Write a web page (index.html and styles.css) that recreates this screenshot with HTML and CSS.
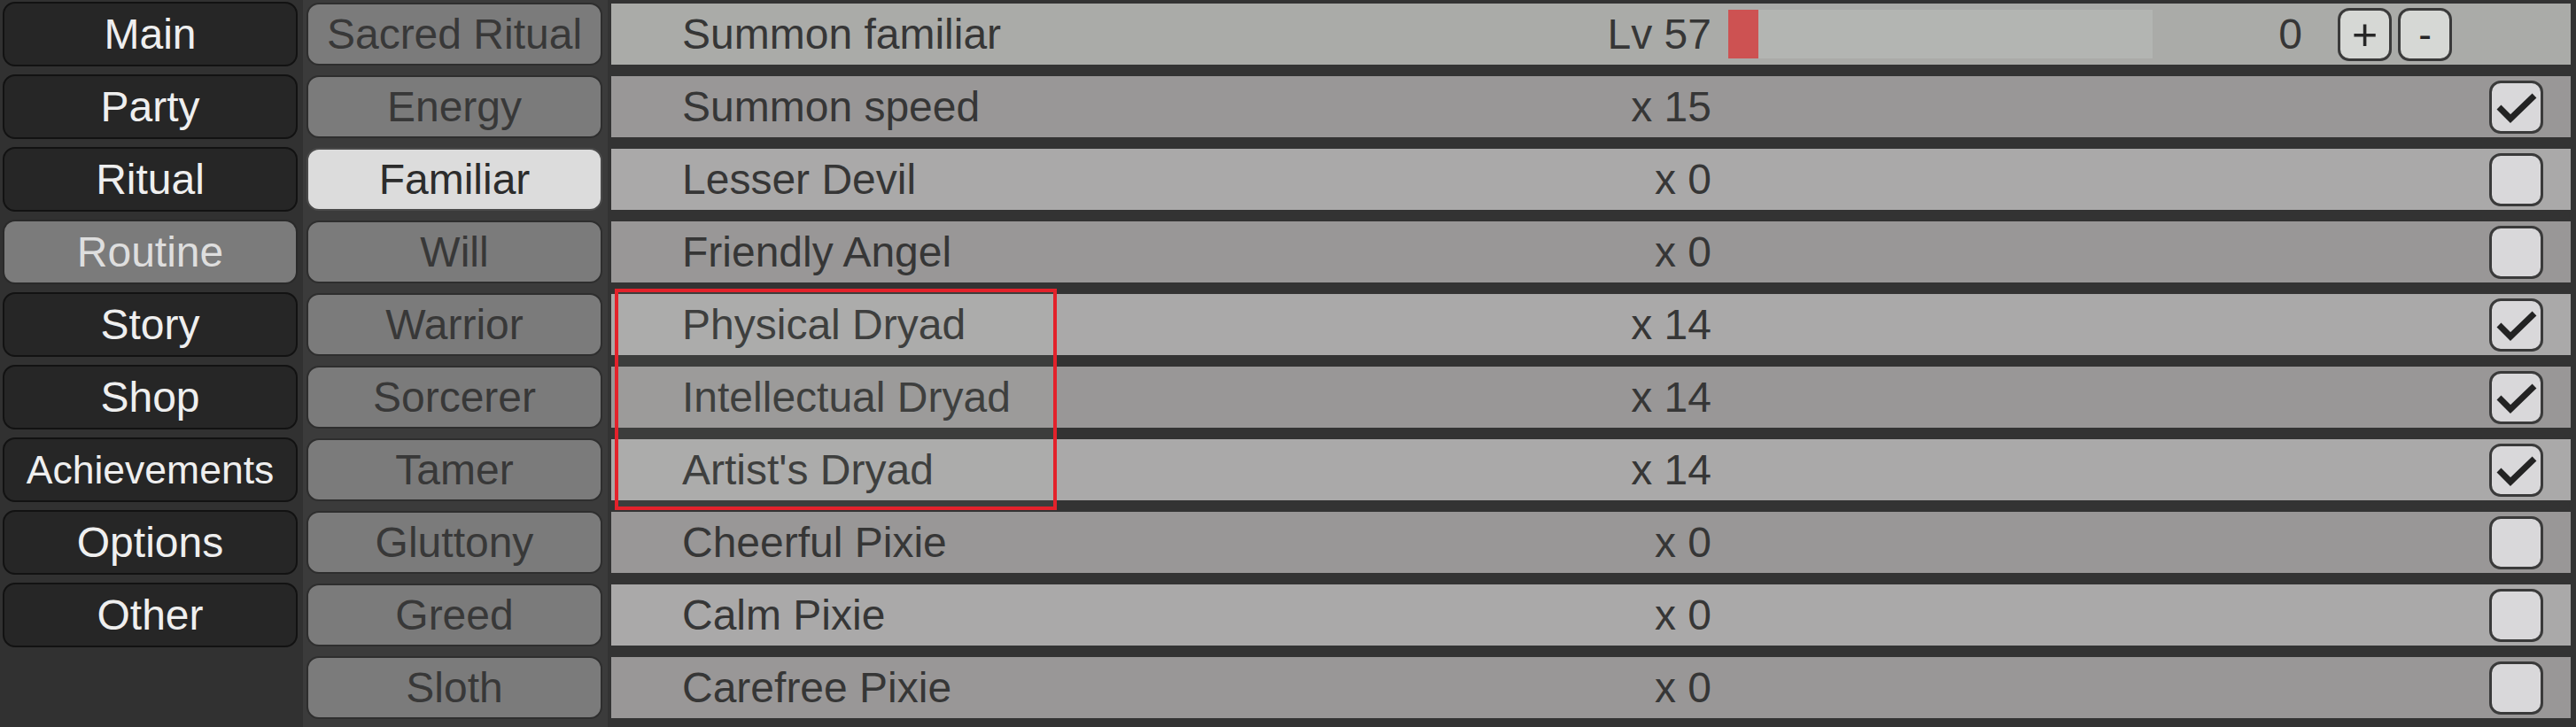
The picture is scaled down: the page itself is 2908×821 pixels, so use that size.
FILE: index.html
```html
<!DOCTYPE html>
<html>
<head>
<meta charset="utf-8">
<link rel="stylesheet" href="styles.css">
</head>
<body>
<div class="app">
  <nav class="col-main">
    <div class="btn-dark">Main</div>
    <div class="btn-dark">Party</div>
    <div class="btn-dark">Ritual</div>
    <div class="btn-dark btn-active">Routine</div>
    <div class="btn-dark">Story</div>
    <div class="btn-dark">Shop</div>
    <div class="btn-dark btn-fit">Achievements</div>
    <div class="btn-dark">Options</div>
    <div class="btn-dark">Other</div>
  </nav>
  <nav class="col-sub">
    <div class="btn-sub">Sacred Ritual</div>
    <div class="btn-sub">Energy</div>
    <div class="btn-sub btn-sel">Familiar</div>
    <div class="btn-sub">Will</div>
    <div class="btn-sub">Warrior</div>
    <div class="btn-sub">Sorcerer</div>
    <div class="btn-sub">Tamer</div>
    <div class="btn-sub">Gluttony</div>
    <div class="btn-sub">Greed</div>
    <div class="btn-sub">Sloth</div>
  </nav>
  <main class="col-list">
    <div class="row row-a">
      <div class="main"><span class="label">Summon familiar</span><span class="val">Lv 57</span></div>
      <div class="bar"><div class="bar-fill" style="width:34px"></div></div>
      <div class="count">0</div>
      <div class="step">+</div>
      <div class="step step-minus">-</div>
    </div>
    <div class="row row-b">
      <div class="main"><span class="label">Summon speed</span><span class="val">x 15</span></div>
      <div class="check on"><svg viewBox="0 0 61 60" width="61" height="60"><path d="M11 30 L24 43 L51 17" fill="none" stroke="#232323" stroke-width="7"/></svg></div>
    </div>
    <div class="row row-a">
      <div class="main"><span class="label">Lesser Devil</span><span class="val">x 0</span></div>
      <div class="check"></div>
    </div>
    <div class="row row-b">
      <div class="main"><span class="label">Friendly Angel</span><span class="val">x 0</span></div>
      <div class="check"></div>
    </div>
    <div class="row row-a">
      <div class="main"><span class="label">Physical Dryad</span><span class="val">x 14</span></div>
      <div class="check on"><svg viewBox="0 0 61 60" width="61" height="60"><path d="M11 30 L24 43 L51 17" fill="none" stroke="#232323" stroke-width="7"/></svg></div>
    </div>
    <div class="row row-b">
      <div class="main"><span class="label">Intellectual Dryad</span><span class="val">x 14</span></div>
      <div class="check on"><svg viewBox="0 0 61 60" width="61" height="60"><path d="M11 30 L24 43 L51 17" fill="none" stroke="#232323" stroke-width="7"/></svg></div>
    </div>
    <div class="row row-a">
      <div class="main"><span class="label">Artist's Dryad</span><span class="val">x 14</span></div>
      <div class="check on"><svg viewBox="0 0 61 60" width="61" height="60"><path d="M11 30 L24 43 L51 17" fill="none" stroke="#232323" stroke-width="7"/></svg></div>
    </div>
    <div class="row row-b">
      <div class="main"><span class="label">Cheerful Pixie</span><span class="val">x 0</span></div>
      <div class="check"></div>
    </div>
    <div class="row row-a">
      <div class="main"><span class="label">Calm Pixie</span><span class="val">x 0</span></div>
      <div class="check"></div>
    </div>
    <div class="row row-b">
      <div class="main"><span class="label">Carefree Pixie</span><span class="val">x 0</span></div>
      <div class="check"></div>
    </div>
    <div class="highlight"></div>
  </main>
</div>
</body>
</html>
```

FILE: styles.css
```css
html, body {
  margin: 0;
  padding: 0;
  background: #323232;
  width: 2908px;
  height: 821px;
  overflow: hidden;
  font-family: "Liberation Sans", Arial, sans-serif;
  font-size: 48px;
}

.app {
  display: flex;
  height: 821px;
}

.col-main {
  width: 342px;
  box-sizing: border-box;
  padding: 2px 6px 0 3px;
  display: flex;
  flex-direction: column;
  gap: 9px;
  background: #313131;
}

.btn-dark {
  height: 73px;
  box-sizing: border-box;
  border: 2px solid #121212;
  border-radius: 14px;
  background: #262626;
  color: #efefef;
  display: flex;
  align-items: center;
  justify-content: center;
  white-space: nowrap;
}

.btn-dark.btn-fit {
  font-size: 44.5px;
}

.btn-dark.btn-active {
  background: #7b7b7b;
  border-color: #2a2a2a;
  color: #dedede;
}

.col-sub {
  width: 344px;
  box-sizing: border-box;
  padding: 3px 6px 0 4px;
  display: flex;
  flex-direction: column;
  gap: 11px;
  background: #3b3b3b;
}

.btn-sub {
  height: 71px;
  box-sizing: border-box;
  border: 2px solid #2e2e2e;
  border-radius: 14px;
  background: #7b7b7b;
  color: #383838;
  display: flex;
  align-items: center;
  justify-content: center;
  white-space: nowrap;
}

.btn-sub.btn-sel {
  background: #dcdcdc;
  border-color: #4a4a4a;
  color: #2c2c2c;
}

.col-list {
  position: relative;
  flex: 1;
  box-sizing: border-box;
  padding: 4px 6px 0 4px;
  display: flex;
  flex-direction: column;
  gap: 13px;
  background: #333333;
}

.row {
  height: 69px;
  display: flex;
  align-items: center;
  color: #363636;
  padding-right: 31px;
}

.row-a { background: #aaa9a9; }
.row-b { background: #999797; }
.row:first-child { background: #aaaba8; }

.main {
  width: 1242px;
  box-sizing: border-box;
  padding-left: 80px;
  display: flex;
  justify-content: space-between;
  white-space: nowrap;
  flex: none;
}

.bar {
  margin-left: 19px;
  width: 479px;
  height: 55px;
  background: #b3b5b2;
  flex: none;
}

.bar-fill {
  height: 100%;
  background: #cd5252;
}

.count {
  width: 169px;
  text-align: right;
  flex: none;
}

.step {
  margin-left: 40px;
  width: 61px;
  height: 60px;
  box-sizing: border-box;
  border: 3px solid #3a3a3a;
  border-radius: 13px;
  background: #d6d8d5;
  color: #262626;
  display: flex;
  align-items: center;
  justify-content: center;
  font-size: 50px;
  line-height: 1;
  flex: none;
}

.step-minus {
  margin-left: 7px;
  font-size: 44px;
}

.check {
  margin-left: auto;
  width: 61px;
  height: 60px;
  box-sizing: border-box;
  border: 3px solid #3a3a3a;
  border-radius: 13px;
  background: #d9d8da;
  position: relative;
  flex: none;
}

.check svg {
  position: absolute;
  left: -3px;
  top: -3px;
}

.highlight {
  position: absolute;
  left: 8px;
  top: 326px;
  width: 499px;
  height: 250px;
  box-sizing: border-box;
  border: 4px solid #e3222b;
  background: rgba(200, 220, 200, 0.06);
}
```
